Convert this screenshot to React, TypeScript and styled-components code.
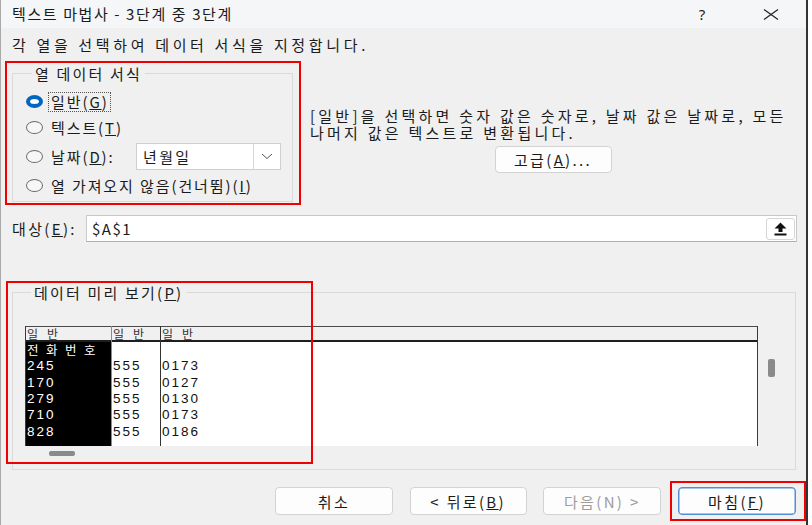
import React from 'react';
import styled, { createGlobalStyle } from 'styled-components';

const Global = createGlobalStyle`
  html, body { margin: 0; padding: 0; background: #ffffff; }
  body { font-family: "Noto Sans CJK KR", "Noto Sans", sans-serif; color: #1b1b1b; }
  #root { width: 812px; height: 525px; }
`;

const KR = `font-family: "Noto Sans CJK KR", "Noto Sans", sans-serif; font-size: 15px; letter-spacing: 2.35px;`;

const Window = styled.div`
  position: relative;
  width: 808px;
  height: 525px;
  box-sizing: border-box;
  border-left: 1px solid #a9a9a9;
  border-right: 2px solid #333333;
  background: #f0f0f0;
  display: flex;
  flex-direction: column;
  overflow: hidden;
`;

const TitleBar = styled.div`
  height: 28px;
  flex: none;
  display: flex;
  align-items: center;
  padding-left: 11px;
  padding-right: 12px;
  background: #f5f6f8;
`;

const Title = styled.div`
  ${KR}
  letter-spacing: 1.6px;
  line-height: 20px;
  flex: 1;
  white-space: nowrap;
`;

const CaptionButton = styled.div<{ $gap?: number }>`
  width: 46px;
  height: 28px;
  margin-right: ${(p) => p.$gap ?? 0}px;
  display: flex;
  align-items: center;
  justify-content: center;
  font-family: "Noto Sans", sans-serif;
  font-size: 15px;
  color: #222;
`;

const Body = styled.div`
  flex: 1;
  display: flex;
  flex-direction: column;
  padding: 0 10px 0 11px;
`;

const Instruction = styled.div`
  ${KR}
  letter-spacing: 3.65px;
  line-height: 17px;
  margin-top: 7.5px;
  white-space: nowrap;
`;

const TopRow = styled.div`
  display: flex;
  margin-top: 12px;
`;

const Group = styled.fieldset<{ $w?: number }>`
  margin: 0;
  box-sizing: border-box;
  border: 1px solid #dadada;
  ${(p) => (p.$w ? `width: ${p.$w}px; flex: none;` : '')}
  min-width: 0;
`;

const FormatGroup = styled(Group)`
  padding: 9.5px 11px 5px 13px;
  display: flex;
  flex-direction: column;
  gap: 5px;
`;

const Legend = styled.legend`
  ${KR}
  letter-spacing: 2.2px;
  line-height: 17px;
  padding: 0 3px;
  margin-left: 6px;
  white-space: nowrap;
`;

const RadioRow = styled.div<{ $h?: number }>`
  height: ${(p) => p.$h ?? 21}px;
  display: flex;
  align-items: center;
`;

const RadioDot = styled.span<{ $on?: boolean }>`
  flex: none;
  width: 17px;
  height: 13px;
  box-sizing: border-box;
  border-radius: 50%;
  border: ${(p) => (p.$on ? '4px solid #0067c0' : '1px solid #6a6a6a')};
  background: ${(p) => (p.$on ? '#ffffff' : '#f7f7f7')};
`;

const RadioLabel = styled.span<{ $focus?: boolean }>`
  ${KR}
  letter-spacing: 1.9px;
  line-height: 18px;
  margin-left: 5px;
  padding: 0 1px 0 2px;
  border: 1px dotted ${(p) => (p.$focus ? '#555' : 'transparent')};
  white-space: nowrap;
`;

const Select = styled.div`
  margin-left: auto;
  width: 145px;
  height: 27px;
  box-sizing: border-box;
  border: 1px solid #cfcfcf;
  background: #ffffff;
  display: flex;
  align-items: stretch;
`;

const SelectValue = styled.div`
  ${KR}
  flex: 1;
  display: flex;
  align-items: center;
  padding-left: 6px;
`;

const SelectArrow = styled.div`
  width: 26px;
  border-left: 1px solid #d8d8d8;
  display: flex;
  align-items: center;
  justify-content: center;
`;

const RightCol = styled.div`
  flex: 1;
  margin-left: 17px;
  display: flex;
  flex-direction: column;
  align-items: center;
`;

const DescLine = styled.div`
  ${KR}
  letter-spacing: 3.25px;
  align-self: stretch;
  height: 17px;
  line-height: 17px;
  white-space: nowrap;
`;

const Description = styled.div`
  align-self: stretch;
  display: flex;
  flex-direction: column;
  margin-top: 42px;
`;

const Button = styled.div<{ $primary?: boolean; $disabled?: boolean; $w?: number }>`
  ${KR}
  width: ${(p) => p.$w ?? 118}px;
  height: 28px;
  box-sizing: border-box;
  border-radius: 4px;
  background: #fdfdfd;
  border: 1px solid ${(p) => (p.$primary ? '#4f8fd8' : '#d3d3d3')};
  box-shadow: ${(p) => (p.$primary ? 'inset 0 0 0 0.5px #4f8fd8' : 'none')};
  color: ${(p) => (p.$disabled ? '#9c9c9c' : '#1b1b1b')};
  display: flex;
  align-items: center;
  justify-content: center;
  white-space: nowrap;
`;

const AdvancedButton = styled(Button)`
  margin-top: 5.5px;
  height: 27px;
`;

const TargetRow = styled.div`
  display: flex;
  align-items: center;
  margin-top: 13px;
  margin-right: -1px;
`;

const TargetLabel = styled.div`
  ${KR}
  width: 74px;
  flex: none;
  white-space: nowrap;
`;

const TargetInput = styled.div`
  flex: 1;
  height: 27px;
  box-sizing: border-box;
  border: 1px solid #c9c9c9;
  border-bottom-color: #b0b0b0;
  background: #ffffff;
  display: flex;
  align-items: center;
  padding: 0 1px 0 5px;
`;

const TargetValue = styled.div`
  ${KR}
  letter-spacing: 1.5px;
  flex: 1;
`;

const CollapseButton = styled.div`
  width: 29px;
  height: 22px;
  box-sizing: border-box;
  border: 1px solid #d6d6d6;
  border-radius: 3px;
  background: #ffffff;
  display: flex;
  align-items: center;
  justify-content: center;
`;

const PreviewGroup = styled(Group)`
  margin-top: 41.5px;
  padding: 25.5px 11px 9px 12px;
  display: flex;
  flex-direction: column;
`;

const PreviewArea = styled.div`
  display: flex;
  flex-direction: column;
`;

const PreviewTop = styled.div`
  display: flex;
`;

const Table = styled.div`
  width: 733px;
  flex: none;
  display: grid;
  grid-template-columns: 86px 49px 1fr;
  border-right: 1.5px solid #3a3a3a;
  box-sizing: border-box;
  background: #ffffff;
`;

const Column = styled.div<{ $edge?: 'outer' | 'soft' | 'hard' }>`
  display: flex;
  flex-direction: column;
  box-sizing: border-box;
  border-left: ${(p) =>
    p.$edge === 'outer' ? '1px solid #3a3a3a' : p.$edge === 'soft' ? '1.5px solid #8a8a8a' : '1.5px solid #333'};
`;

const HeadCell = styled.div`
  height: 16px;
  box-sizing: border-box;
  background: #f0f0f0;
  border-top: 1px solid #4a4a4a;
  border-bottom: 2px solid #1e1e1e;
  display: flex;
  align-items: center;
  font-family: "Noto Sans CJK KR", sans-serif;
  font-size: 12px;
  letter-spacing: 9px;
  line-height: 13px;
  padding-left: 1px;
  color: #333;
  white-space: nowrap;
  overflow: hidden;
`;

const ColBody = styled.div<{ $sel?: boolean }>`
  height: 104px;
  background: ${(p) => (p.$sel ? '#000000' : '#ffffff')};
  color: ${(p) => (p.$sel ? '#ffffff' : '#111111')};
  display: flex;
  flex-direction: column;
`;

const DataCell = styled.div<{ $kr?: boolean }>`
  height: 16.3px;
  display: flex;
  align-items: center;
  line-height: 14px;
  padding-left: 1px;
  white-space: nowrap;
  font-family: ${(p) => (p.$kr ? '"Noto Sans CJK KR", sans-serif' : '"Liberation Sans", Arial, sans-serif')};
  font-size: ${(p) => (p.$kr ? '12.5px' : '13.5px')};
  letter-spacing: ${(p) => (p.$kr ? '7.5px' : '2px')};
`;

const VTrack = styled.div`
  flex: 1;
  display: flex;
  flex-direction: column;
  padding: 33px 0 0 10px;
`;

const VThumb = styled.div`
  width: 7px;
  height: 18px;
  border-radius: 2px;
  background: #8a8a8a;
`;

const HTrack = styled.div`
  height: 14px;
  display: flex;
  align-items: center;
  padding-left: 24px;
`;

const HThumb = styled.div`
  width: 26px;
  height: 5px;
  border-radius: 2px;
  background: #8a8a8a;
`;

const ButtonRow = styled.div`
  display: flex;
  justify-content: flex-end;
  gap: 16.7px;
  margin-top: 17px;
`;

const Highlight = styled.div<{ $x: number; $y: number; $w: number; $h: number }>`
  position: absolute;
  left: ${(p) => p.$x - 1}px;
  top: ${(p) => p.$y}px;
  width: ${(p) => p.$w}px;
  height: ${(p) => p.$h}px;
  box-sizing: border-box;
  border: 2.5px solid #f00000;
  pointer-events: none;
`;

const CloseIcon = () => (
  <svg width="16" height="11" viewBox="0 0 16 11">
    <path d="M1 0.5 L15 10.5 M15 0.5 L1 10.5" stroke="#222" strokeWidth="1.2" fill="none" />
  </svg>
);

const ChevronDown = () => (
  <svg width="12" height="7" viewBox="0 0 12 7">
    <path d="M1 1 L6 5.5 L11 1" stroke="#555" strokeWidth="1" fill="none" />
  </svg>
);

const UploadIcon = () => (
  <svg width="13" height="14" viewBox="0 0 13 14">
    <path d="M6.5 0.5 L12.5 6.5 L8.5 6.5 L8.5 10 L4.5 10 L4.5 6.5 L0.5 6.5 Z" fill="#111" />
    <rect x="0.5" y="11.5" width="12" height="2" fill="#111" />
  </svg>
);

const rows = [
  ['전화번호', '', ''],
  ['245', '555', '0173'],
  ['170', '555', '0127'],
  ['279', '555', '0130'],
  ['710', '555', '0173'],
  ['828', '555', '0186'],
];

const isKr = (s: string) => /[\uac00-\ud7a3]/.test(s);

export default function App() {
  const cols: Array<{ edge: 'outer' | 'soft' | 'hard'; sel: boolean }> = [
    { edge: 'outer', sel: true },
    { edge: 'soft', sel: false },
    { edge: 'hard', sel: false },
  ];
  return (
    <>
      <Global />
      <Window>
        <TitleBar>
          <Title>텍스트 마법사 - 3단계 중 3단계</Title>
          <CaptionButton $gap={23}>?</CaptionButton>
          <CaptionButton>
            <CloseIcon />
          </CaptionButton>
        </TitleBar>
        <Body>
          <Instruction>각 열을 선택하여 데이터 서식을 지정합니다.</Instruction>
          <TopRow>
            <FormatGroup $w={281}>
              <Legend>열 데이터 서식</Legend>
              <RadioRow>
                <RadioDot $on />
                <RadioLabel $focus>
                  일반(<u>G</u>)
                </RadioLabel>
              </RadioRow>
              <RadioRow>
                <RadioDot />
                <RadioLabel>
                  텍스트(<u>T</u>)
                </RadioLabel>
              </RadioRow>
              <RadioRow $h={27}>
                <RadioDot />
                <RadioLabel>
                  날짜(<u>D</u>):
                </RadioLabel>
                <Select>
                  <SelectValue>년월일</SelectValue>
                  <SelectArrow>
                    <ChevronDown />
                  </SelectArrow>
                </Select>
              </RadioRow>
              <RadioRow>
                <RadioDot />
                <RadioLabel>
                  열 가져오지 않음(건너뜀)(<u>I</u>)
                </RadioLabel>
              </RadioRow>
            </FormatGroup>
            <RightCol>
              <Description>
                <DescLine>[일반]을 선택하면 숫자 값은 숫자로, 날짜 값은 날짜로, 모든</DescLine>
                <DescLine>나머지 값은 텍스트로 변환됩니다.</DescLine>
              </Description>
              <AdvancedButton $w={117}>
                고급(<u>A</u>)...
              </AdvancedButton>
            </RightCol>
          </TopRow>
          <TargetRow>
            <TargetLabel>
              대상(<u>E</u>):
            </TargetLabel>
            <TargetInput>
              <TargetValue>$A$1</TargetValue>
              <CollapseButton>
                <UploadIcon />
              </CollapseButton>
            </TargetInput>
          </TargetRow>
          <PreviewGroup>
            <Legend>
              데이터 미리 보기(<u>P</u>)
            </Legend>
            <PreviewArea>
              <PreviewTop>
                <Table>
                  {cols.map((c, ci) => (
                    <Column key={ci} $edge={c.edge}>
                      <HeadCell>일반</HeadCell>
                      <ColBody $sel={c.sel}>
                        {rows.map((r, ri) => (
                          <DataCell key={ri} $kr={isKr(r[ci])}>
                            {r[ci] || '\u00a0'}
                          </DataCell>
                        ))}
                      </ColBody>
                    </Column>
                  ))}
                </Table>
                <VTrack>
                  <VThumb />
                </VTrack>
              </PreviewTop>
              <HTrack>
                <HThumb />
              </HTrack>
            </PreviewArea>
          </PreviewGroup>
          <ButtonRow>
            <Button>취소</Button>
            <Button $w={117}>
              &lt; 뒤로(<u>B</u>)
            </Button>
            <Button $disabled>다음(N) &gt;</Button>
            <Button $primary>
              마침(<u>F</u>)
            </Button>
          </ButtonRow>
        </Body>
        <Highlight $x={5} $y={61} $w={296} $h={144} />
        <Highlight $x={6} $y={281} $w={307} $h={183} />
        <Highlight $x={670} $y={481} $w={136} $h={40} />
      </Window>
    </>
  );
}
